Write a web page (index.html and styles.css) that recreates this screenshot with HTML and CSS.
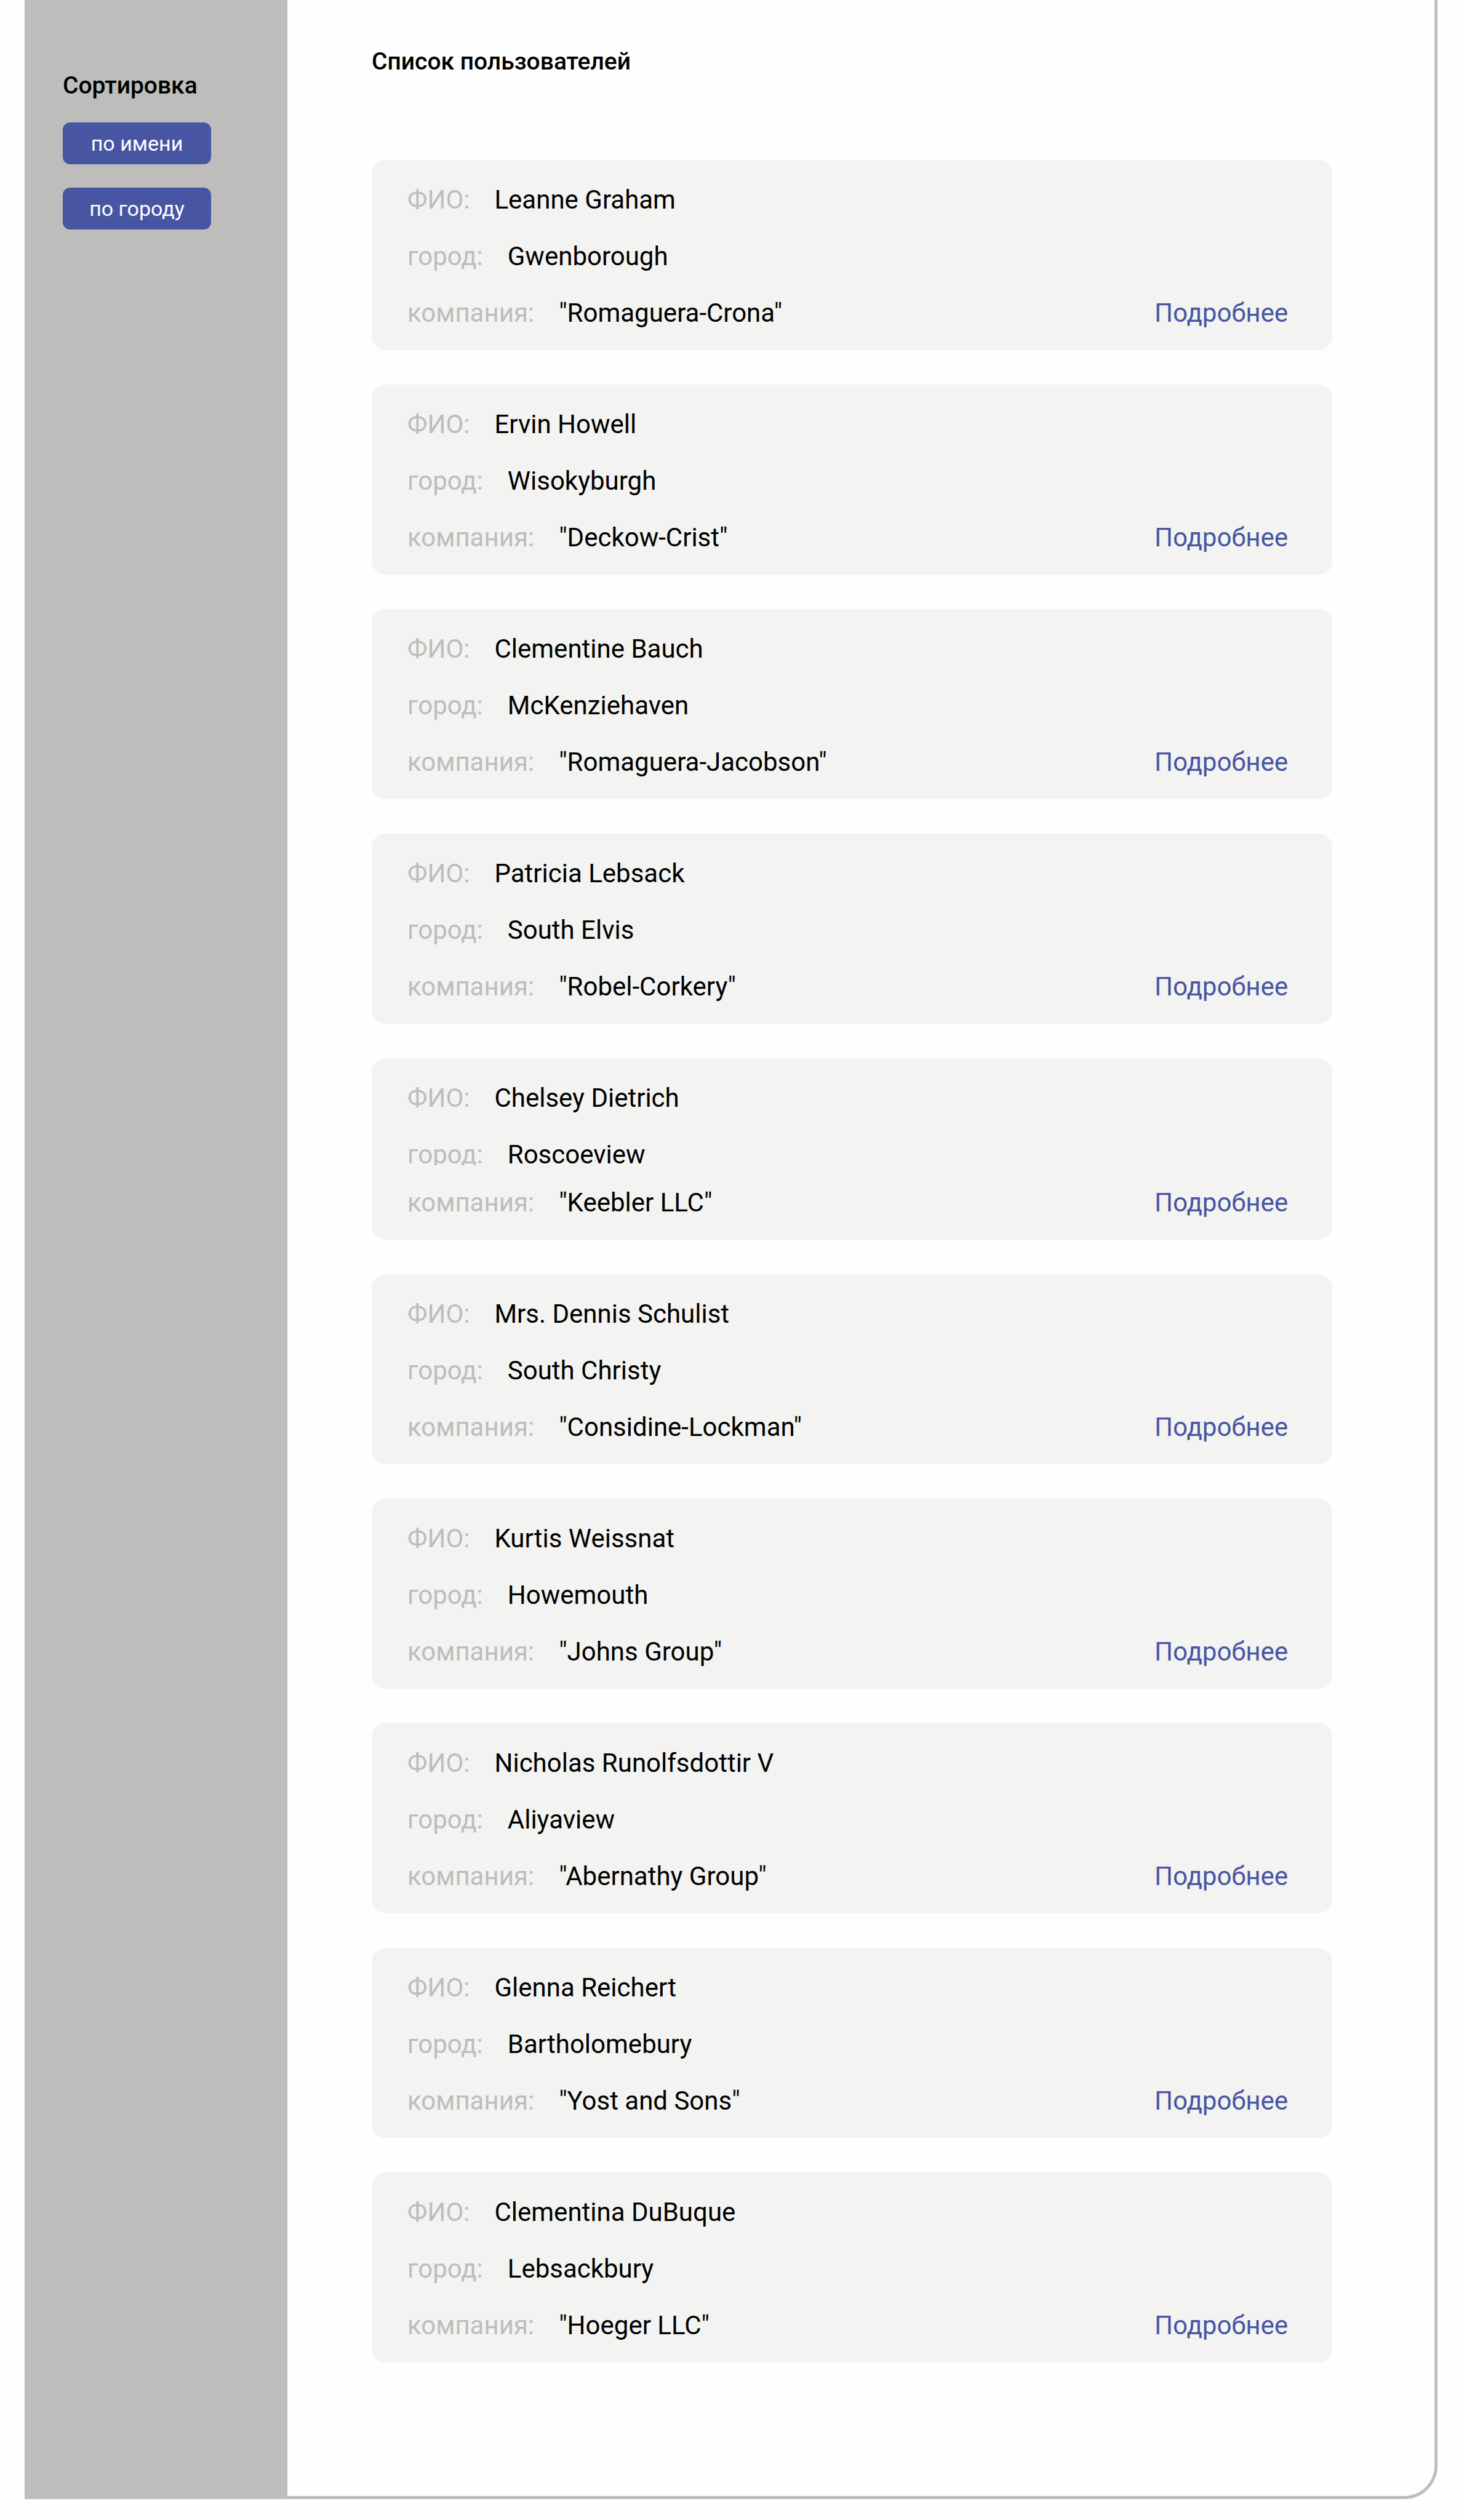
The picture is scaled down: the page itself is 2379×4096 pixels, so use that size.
FILE: index.html
```html
<!DOCTYPE html>
<html lang="ru">
<head>
<meta charset="utf-8">
<title>Список пользователей</title>
<link rel="stylesheet" href="styles.css">
</head>
<body>
<div class="frame">
  <aside class="sidebar">
    <h2 class="title">Сортировка</h2>
    <div class="sorts">
      <button class="sort" type="button">по имени</button>
      <button class="sort" type="button">по городу</button>
    </div>
  </aside>
  <main class="content">
    <h1 class="title">Список пользователей</h1>
    <ul class="cards">
      <li class="card"><p class="row"><span class="label">ФИО:</span><span>Leanne Graham</span></p><p class="row"><span class="label">город:</span><span>Gwenborough</span></p><p class="row"><span class="label">компания:</span><span>"Romaguera-Crona"</span><a class="more" href="#">Подробнее</a></p></li>
      <li class="card"><p class="row"><span class="label">ФИО:</span><span>Ervin Howell</span></p><p class="row"><span class="label">город:</span><span>Wisokyburgh</span></p><p class="row"><span class="label">компания:</span><span>"Deckow-Crist"</span><a class="more" href="#">Подробнее</a></p></li>
      <li class="card"><p class="row"><span class="label">ФИО:</span><span>Clementine Bauch</span></p><p class="row"><span class="label">город:</span><span>McKenziehaven</span></p><p class="row"><span class="label">компания:</span><span>"Romaguera-Jacobson"</span><a class="more" href="#">Подробнее</a></p></li>
      <li class="card"><p class="row"><span class="label">ФИО:</span><span>Patricia Lebsack</span></p><p class="row"><span class="label">город:</span><span>South Elvis</span></p><p class="row"><span class="label">компания:</span><span>"Robel-Corkery"</span><a class="more" href="#">Подробнее</a></p></li>
      <li class="card"><p class="row"><span class="label">ФИО:</span><span>Chelsey Dietrich</span></p><p class="row row-cut"><span class="label">город:</span><span>Roscoeview</span></p><p class="row"><span class="label">компания:</span><span>"Keebler LLC"</span><a class="more" href="#">Подробнее</a></p></li>
      <li class="card"><p class="row"><span class="label">ФИО:</span><span>Mrs. Dennis Schulist</span></p><p class="row"><span class="label">город:</span><span>South Christy</span></p><p class="row"><span class="label">компания:</span><span>"Considine-Lockman"</span><a class="more" href="#">Подробнее</a></p></li>
      <li class="card"><p class="row"><span class="label">ФИО:</span><span>Kurtis Weissnat</span></p><p class="row"><span class="label">город:</span><span>Howemouth</span></p><p class="row"><span class="label">компания:</span><span>"Johns Group"</span><a class="more" href="#">Подробнее</a></p></li>
      <li class="card"><p class="row"><span class="label">ФИО:</span><span>Nicholas Runolfsdottir V</span></p><p class="row"><span class="label">город:</span><span>Aliyaview</span></p><p class="row"><span class="label">компания:</span><span>"Abernathy Group"</span><a class="more" href="#">Подробнее</a></p></li>
      <li class="card"><p class="row"><span class="label">ФИО:</span><span>Glenna Reichert</span></p><p class="row"><span class="label">город:</span><span>Bartholomebury</span></p><p class="row"><span class="label">компания:</span><span>"Yost and Sons"</span><a class="more" href="#">Подробнее</a></p></li>
      <li class="card"><p class="row"><span class="label">ФИО:</span><span>Clementina DuBuque</span></p><p class="row"><span class="label">город:</span><span>Lebsackbury</span></p><p class="row"><span class="label">компания:</span><span>"Hoeger LLC"</span><a class="more" href="#">Подробнее</a></p></li>
    </ul>
  </main>
</div>
</body>
</html>
```
FILE: styles.css
```css
* {
  box-sizing: border-box;
}

body {
  margin: 0;
  background: #fefefe;
  color: #000;
  font-family: Roboto, "Liberation Sans", sans-serif;
  font-size: 42px;
  line-height: 52px;
}

h1,
h2,
p,
ul {
  margin: 0;
  padding: 0;
}

.frame {
  display: flex;
  margin: 0 43px 34px 40px;
  border: solid #bdbdbb;
  border-width: 0 5px 5px 0;
  border-bottom-right-radius: 54px;
}

.sidebar {
  flex: 0 0 427px;
  padding: 113px 62px;
  background: #bdbdbb;
}

.title {
  font-size: 39px;
  line-height: 52px;
  font-weight: 500;
}

.sorts {
  display: grid;
  justify-items: start;
  gap: 38px;
  margin-top: 34px;
}

.sort {
  width: 241px;
  height: 68px;
  padding: 0;
  border: 0;
  border-radius: 12px;
  background: #4755a3;
  color: #fff;
  font: 34px/52px Roboto, "Liberation Sans", sans-serif;
}

.content {
  flex: 1;
  padding: 74px 166px 217px 137px;
}

.cards {
  margin-top: 134px;
  list-style: none;
  display: grid;
  gap: 56px;
}

.card {
  padding: 39px 72px 34px 58px;
  border-radius: 22px;
  background: #f3f3f1;
}

.row {
  display: flex;
  gap: 40px;
  margin-bottom: 40px;
}

.row:last-child {
  margin-bottom: 0;
}

.row-cut {
  height: 43px;
  margin-bottom: 35px;
  overflow: hidden;
}

.label {
  color: #bdbdbb;
}

.more {
  margin-left: auto;
  color: #4755a3;
  text-decoration: none;
}
```
